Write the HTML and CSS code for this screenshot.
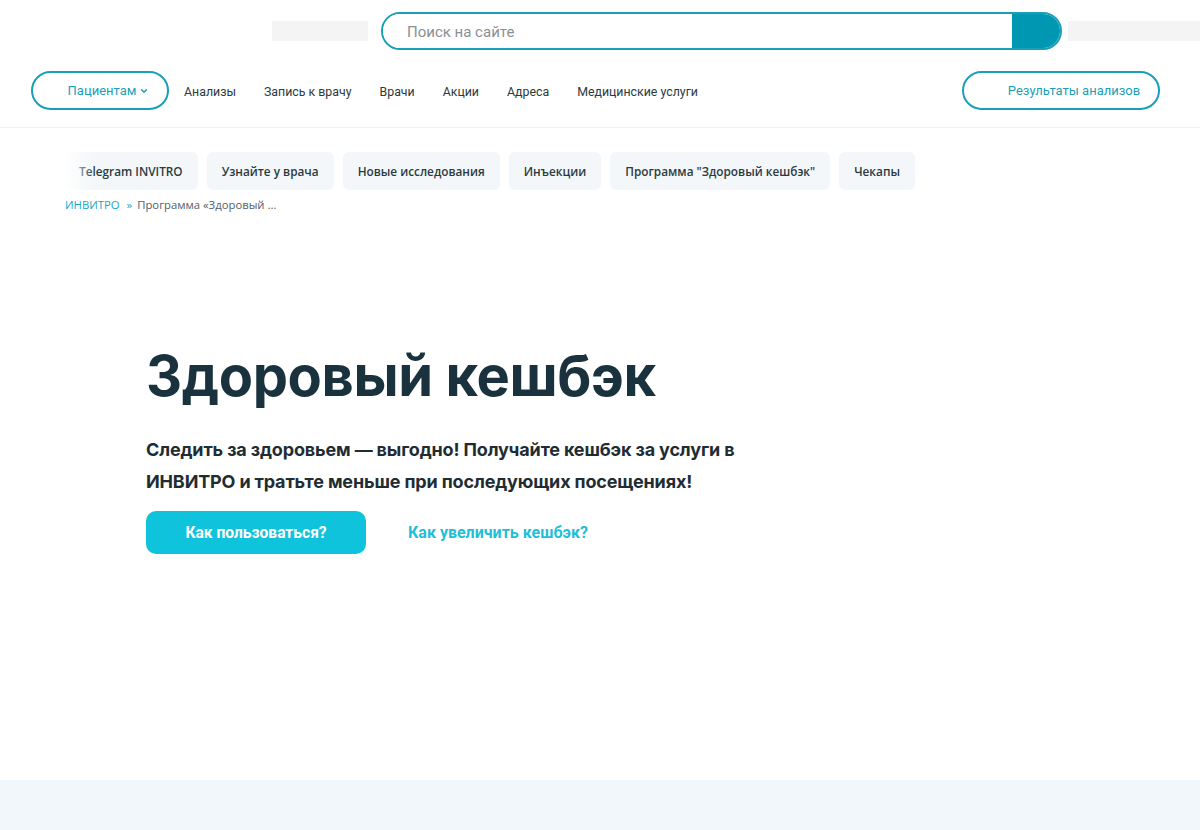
FILE: index.html
```html
<!DOCTYPE html>
<html lang="ru">
<head>
<meta charset="utf-8">
<title>Здоровый кешбэк</title>
<link rel="stylesheet" href="styles.css">
</head>
<body>
<header class="header">
  <div class="top-row">
    <div class="ph ph-left"></div>
    <form class="search">
      <input class="search-input" type="text" placeholder="Поиск на сайте">
      <button class="search-btn" type="button" aria-label="Найти"></button>
    </form>
    <div class="ph ph-right"></div>
  </div>
  <nav class="nav-row">
    <a class="pill pill-patients" href="#">Пациентам <svg class="chev" width="8" height="6" viewBox="0 0 8 6"><path d="M1.5 1.8 L4 4.2 L6.5 1.8" fill="none" stroke="#1a9fb8" stroke-width="1.5" stroke-linecap="round"/></svg></a>
    <ul class="links">
      <li><a href="#">Анализы</a></li>
      <li><a href="#">Запись к врачу</a></li>
      <li><a href="#">Врачи</a></li>
      <li><a href="#">Акции</a></li>
      <li><a href="#">Адреса</a></li>
      <li><a href="#">Медицинские услуги</a></li>
    </ul>
    <a class="pill pill-results" href="#">Результаты анализов</a>
  </nav>
</header>

<section class="subnav">
  <div class="tabs">
    <a class="tab" href="#">Telegram INVITRO</a>
    <a class="tab" href="#">Узнайте у врача</a>
    <a class="tab" href="#">Новые исследования</a>
    <a class="tab" href="#">Инъекции</a>
    <a class="tab" href="#">Программа "Здоровый кешбэк"</a>
    <a class="tab" href="#">Чекапы</a>
    <div class="fade"></div>
  </div>
  <div class="crumbs"><a href="#">ИНВИТРО</a><span class="sep">»</span><span>Программа «Здоровый ...</span></div>
</section>

<main class="hero">
  <h1 class="title">Здоровый кешбэк</h1>
  <p class="lead">Следить за здоровьем — выгодно! Получайте кешбэк за услуги в ИНВИТРО и тратьте меньше при последующих посещениях!</p>
  <div class="actions">
    <a class="btn" href="#">Как пользоваться?</a>
    <a class="link" href="#">Как увеличить кешбэк?</a>
  </div>
</main>

<footer class="band"></footer>
</body>
</html>
```

FILE: styles.css
```css
* { box-sizing: border-box; }
html, body { margin: 0; padding: 0; }
body {
  width: 1200px;
  height: 830px;
  overflow: hidden;
  background: #fff;
  font-family: Roboto, "Liberation Sans", sans-serif;
  color: #1f2f36;
  display: flex;
  flex-direction: column;
}
a { text-decoration: none; color: inherit; }

.header {
  border-bottom: 1px solid #eef1f3;
  height: 128px;
}
.top-row {
  display: flex;
  align-items: center;
  height: 62px;
  padding-top: 0;
}
.ph { height: 20px; background: #f4f4f4; }
.ph-left { width: 96px; margin-left: 272px; margin-right: 13px; }
.ph-right { flex: 1; margin-left: 6px; }
.search {
  width: 681px;
  height: 38px;
  display: flex;
  border: 2px solid #1a9fb8;
  border-radius: 19px;
  overflow: hidden;
  margin: 0;
}
.search-input {
  flex: 1;
  border: 0;
  outline: none;
  padding: 2px 0 0 24px;
  font-family: Roboto, "Liberation Sans", sans-serif;
  font-size: 15px;
  color: #333;
  background: #fff;
}
.search-input::placeholder { color: #8a8f93; }
.search-btn {
  width: 48px;
  border: 0;
  background: #0097b3;
  padding: 0;
}

.nav-row {
  display: flex;
  align-items: center;
  padding: 0 40px 0 31px;
  height: 58px;
  margin-top: -1px;
}
.pill {
  display: flex;
  align-items: center;
  justify-content: center;
  height: 39px;
  border: 2px solid #1a9fb8;
  border-radius: 20px;
  color: #1a9fb8;
  font-size: 13px;
}
.pill-patients { width: 138px; padding-left: 16px; gap: 4px; }
.chev { margin-top: 2px; }
.links {
  display: flex;
  list-style: none;
  margin: 0 0 0 15px;
  padding: 0;
  gap: 28px;
  flex: 1;
}
.links a { font-size: 12.35px; color: #2c3a40; }
.pill-results { width: 198px; padding-left: 26px; font-size: 13px; }

.subnav { padding: 24px 0 0 65px; }
.tabs {
  position: relative;
  display: flex;
  gap: 9px;
}
.tab {
  display: flex;
  align-items: center;
  height: 38px;
  padding: 0 15px;
  background: #f3f7f9;
  border-radius: 6px;
  font-family: "Open Sans", "Liberation Sans", sans-serif;
  font-weight: 600;
  font-size: 11.8px;
  color: #2c3a40;
}
.tab:first-child { padding-left: 14px; padding-right: 15px; }
.fade {
  position: absolute;
  left: -10px;
  top: -4px;
  width: 40px;
  height: 46px;
  background: linear-gradient(to right, #fff 20%, rgba(255,255,255,0));
}
.crumbs {
  margin-top: 7px;
  font-family: "Open Sans", "Liberation Sans", sans-serif;
  font-size: 11.3px;
  color: #53606a;
  display: flex;
  align-items: center;
}
.crumbs a { color: #1ba6c4; }
.crumbs .sep { color: #1ba6c4; margin: 0 5px 0 7px; }

.hero {
  flex: 1;
  padding: 130px 0 0 146px;
}
.title {
  margin: 0;
  font-family: Inter, "Liberation Sans", sans-serif;
  font-weight: 700;
  font-size: 56px;
  line-height: 68px;
  letter-spacing: -0.4px;
  color: #19323d;
}
.lead {
  margin: 24px 0 0;
  width: 610px;
  font-family: Inter, "Liberation Sans", sans-serif;
  font-weight: 700;
  font-size: 18px;
  line-height: 32px;
  letter-spacing: -0.15px;
  color: #1f2d33;
}
.actions {
  display: flex;
  align-items: center;
  margin-top: 13px;
}
.btn {
  display: flex;
  align-items: center;
  justify-content: center;
  width: 220px;
  height: 43px;
  background: #10c3dc;
  border-radius: 10px;
  color: #fff;
  font-weight: 700;
  font-size: 15.6px;
}
.link {
  margin-left: 42px;
  color: #1fbfd9;
  font-weight: 700;
  font-size: 16px;
}
.band {
  height: 50px;
  background: #f1f7fa;
  flex: none;
}
```
